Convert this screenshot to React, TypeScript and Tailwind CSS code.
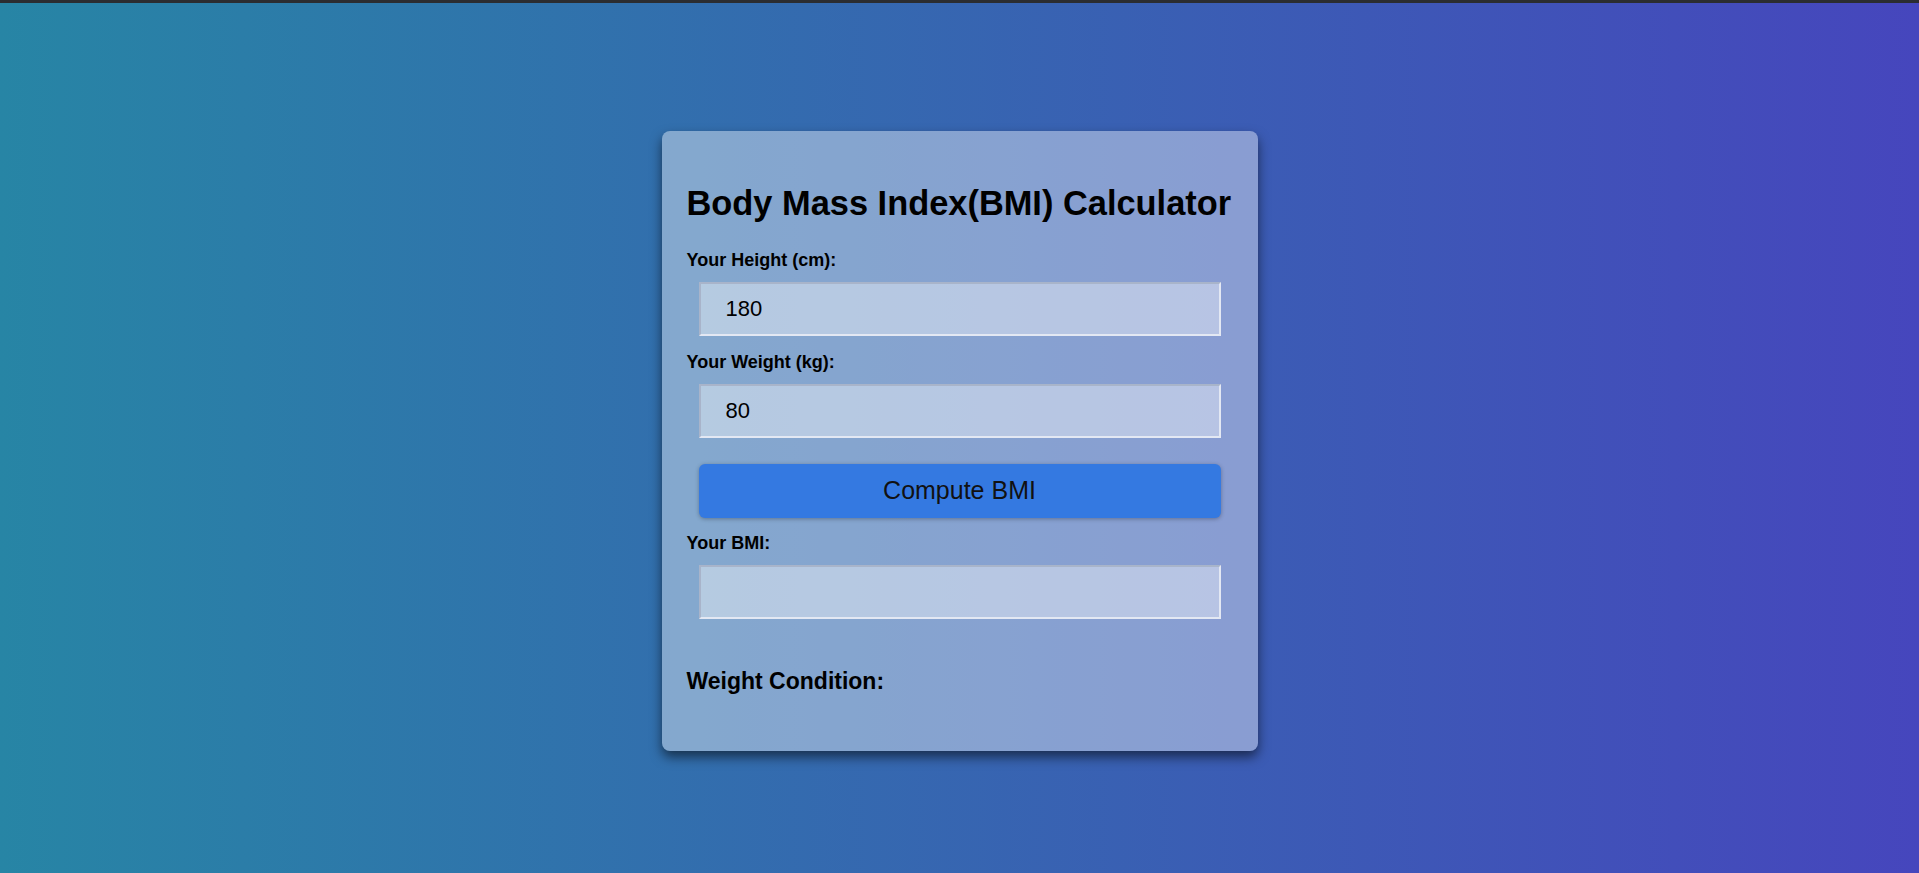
import React, { useState } from "react";

const inputClass =
  "block w-[522px] h-[54px] mx-[12px] px-[25px] bg-white/40 border-2 border-t-[#a8b4ca] border-l-[#a8b4ca] border-b-[#e3e8f3] border-r-[#e3e8f3] text-[22px] text-black outline-none font-['Liberation_Sans',Arial,sans-serif]";

const labelClass =
  "block h-[20px] leading-[20px] text-[18px] font-bold text-black font-['Liberation_Sans',Arial,sans-serif]";

const App = () => {
  const [height, setHeight] = useState("180");
  const [weight, setWeight] = useState("80");
  const [bmi, setBmi] = useState("");
  const [condition, setCondition] = useState("");

  const computeBmi = () => {
    const h = parseFloat(height) / 100;
    const w = parseFloat(weight);
    if (!h || !w) return;
    const value = w / (h * h);
    setBmi(value.toFixed(2));
    if (value < 18.5) setCondition("Underweight");
    else if (value < 25) setCondition("Normal");
    else if (value < 30) setCondition("Overweight");
    else setCondition("Obese");
  };

  return (
    <div className="min-h-screen flex flex-col bg-[#2b2d31]">
      <div className="h-[3px] bg-[#2b2d31]" />
      <div className="flex-1 flex justify-center pt-[128px] bg-linear-to-r/srgb from-[#2785a5] to-[#4646bd]">
        <div className="w-[596px] h-[620px] self-start rounded-[8px] bg-white/40 shadow-[0_6px_12px_rgba(0,0,0,0.55)] px-[25px] pt-[55px]">
          <h1 className="h-[34px] leading-[34px] text-[34.4px] font-bold text-black whitespace-nowrap font-['Liberation_Sans',Arial,sans-serif]">
            Body Mass Index(BMI) Calculator
          </h1>

          <label className={`${labelClass} mt-[30px]`}>Your Height (cm):</label>
          <input
            className={`${inputClass} mt-[12px]`}
            value={height}
            onChange={(e) => setHeight(e.target.value)}
          />

          <label className={`${labelClass} mt-[16px]`}>Your Weight (kg):</label>
          <input
            className={`${inputClass} mt-[12px]`}
            value={weight}
            onChange={(e) => setWeight(e.target.value)}
          />

          <button
            onClick={computeBmi}
            className="block w-[522px] h-[54px] mx-[12px] mt-[26px] rounded-[6px] bg-[#3479e1] shadow-[0_1px_4px_rgba(0,0,0,0.3)] text-[25px] text-[#111] font-['Liberation_Sans',Arial,sans-serif]"
          >
            Compute BMI
          </button>

          <label className={`${labelClass} mt-[15px]`}>Your BMI:</label>
          <input className={`${inputClass} mt-[12px]`} value={bmi} readOnly />

          <h3 className="mt-[49px] h-[26px] leading-[26px] text-[23px] font-bold text-black font-['Liberation_Sans',Arial,sans-serif]">
            Weight Condition: {condition}
          </h3>
        </div>
      </div>
    </div>
  );
};

export default App;
